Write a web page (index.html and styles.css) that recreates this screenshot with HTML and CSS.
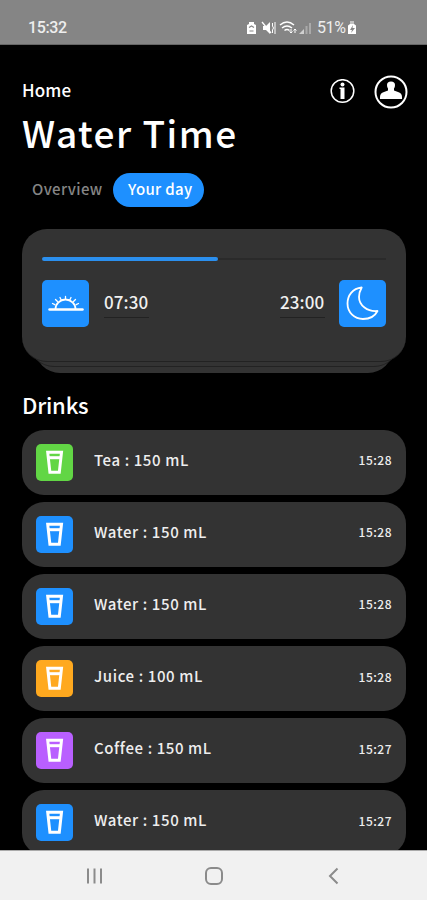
FILE: index.html
```html
<!DOCTYPE html>
<html lang="en">
<head>
    <meta charset="utf-8">
    <title>Water Time</title>
    <link rel="stylesheet" href="styles.css">
</head>
<body>
    <div class="phone">
        <div class="status-bar">
            <span class="status-time">15:32</span>
            <svg class="status-icons" width="68" height="16" viewBox="0 0 68 16">
                <path d="M2 14V5l2-1V2h5v2l2 1v9z" fill="#fff"/>
                <path d="M4 7.500L6.500 6 9 7.500M4.500 11h4" stroke="#858585" stroke-width="1.200" fill="none"/>
                <path d="M18 6h3l4-4v12l-4-4h-3z" fill="#fff"/>
                <path d="M17 2l9 11" stroke="#fff" stroke-width="1.300"/>
                <path d="M27.500 3v3l1 2-1 2v3M30 2v12" stroke="#fff" stroke-width="1" fill="none"/>
                <path d="M35 5q7-6 14 0M37 8q5-4 10 0M39.500 10.500q2.500-2 5 0" stroke="#fff" stroke-width="1.500" fill="none"/>
                <path d="M46 9v4M44.500 11.500L46 13l1.500-1.500M50 13V9M48.500 10.500L50 9l1.500 1.500" stroke="#fff" stroke-width="1" fill="none"/>
                <path d="M54 14l5-5v5z" fill="#d0d0d0"/>
                <path d="M61.500 14V6M65 14V3" stroke="#aaa" stroke-width="2"/>
            </svg>
            <span class="battery-text">51%</span>
            <svg class="battery" width="10" height="14" viewBox="0 0 10 14">
                <path d="M3 0h4v3H3z" fill="#c2c2c2"/>
                <path d="M1 4.500L3 3h4l2 1.500V13H1z" fill="#fff"/>
                <path d="M6 4L3 9h2l-1 3 4-5H5.500z" fill="#858585"/>
            </svg>
        </div>

        <div class="page">
            <div class="top">
                <div class="heading">
                    <div class="home">Home</div>
                    <h1>Water Time</h1>
                </div>
                <div class="actions">
                    <svg width="26" height="26" viewBox="0 0 26 26">
                        <circle cx="13.500" cy="12" r="11.300" fill="none" stroke="#fff" stroke-width="1.500"/>
                        <circle cx="13.500" cy="5.400" r="2" fill="#fff"/>
                        <path d="M10.500 8.500H15.500v11.500h-4V10h-1z" fill="#fff"/>
                    </svg>
                    <svg width="34" height="34" viewBox="0 0 34 34">
                        <circle cx="17" cy="17" r="15.500" fill="none" stroke="#fff" stroke-width="2"/>
                        <path d="M6 24v-2q0-4 4-5l4-1.500v-2q-1-1-1-3.500 0-3.500 4-3.500t4 3.500q0 2.500-1 3.500v2l4 1.500q4 1 4 5v2z" fill="#fff"/>
                    </svg>
                </div>
            </div>

            <div class="tabs">
                <span class="tab">Overview</span>
                <span class="tab active">Your day</span>
            </div>

            <div class="day-stack">
                <div class="day-card">
                    <div class="progress"><div class="bar" style="width: 51.2%"></div></div>
                    <div class="hours">
                        <div class="tile">
                            <svg width="47" height="47" viewBox="0 0 47 47" fill="none" stroke="#fff" stroke-linecap="round">
                                <path d="M7.500 29.500h33" stroke-width="2.500"/>
                                <path d="M13.500 29a10 9.500 0 0 1 20 0" stroke-width="1.800"/>
                                <path d="M23.500 16.500v2.500M18 17.500l1.200 2.500M29 17.500l-1.200 2.500M13.500 19.500l2 2M33.500 19.500l-2 2M10.500 23.500l2.300 1.200M36.500 23.500l-2.300 1.200" stroke-width="1.300"/>
                            </svg>
                        </div>
                        <span class="hour">07:30</span>
                        <span class="hour night">23:00</span>
                        <div class="tile">
                            <svg width="47" height="47" viewBox="0 0 47 47" fill="none" stroke="#fff" stroke-width="1.800" stroke-linejoin="round">
                                <path d="M22.700 7.500C13.500 8.500 8.500 15.500 8.500 23.500 8.500 32.500 15.500 39 24 39c6.500 0 12-3 14.500-8C28.500 32 20 25.500 20 17c0-3.500 1-6.500 2.700-9.500z"/>
                            </svg>
                        </div>
                    </div>
                </div>
                <div class="layer"></div>
                <div class="layer last"></div>
            </div>

            <h2>Drinks</h2>
            <div class="drinks" id="drinks"></div>
        </div>

        <div class="nav-bar">
            <svg width="427" height="49" viewBox="0 0 427 49" fill="none" stroke="#8b8b8b" stroke-width="2">
                <path d="M88 17.500v15M94.500 17.500v15M101 17.500v15"/>
                <rect x="206" y="17" width="16" height="16" rx="5"/>
                <path d="M337.500 17.500l-7.500 7.500 7.500 7.500"/>
            </svg>
        </div>
    </div>

    <script>
        const drinks = [
            ["Tea", 150, "15:28", "green"],
            ["Water", 150, "15:28", "blue"],
            ["Water", 150, "15:28", "blue"],
            ["Juice", 100, "15:28", "orange"],
            ["Coffee", 150, "15:27", "purple"],
            ["Water", 150, "15:27", "blue"]
        ];

        const cup = `<svg width="37" height="37" viewBox="0 0 37 37" fill="none" stroke="#fff" stroke-width="3">
            <path d="M11.700 8.300h13.800l-2.200 20h-9.400z"/>
            <path d="M12 13.700h13"/>
        </svg>`;

        document.getElementById("drinks").innerHTML = drinks.map(([name, amount, time, color]) =>
            `<div class="drink">
                <div class="cup ${color}">${cup}</div>
                <span class="name">${name} : ${amount} mL</span>
                <span class="time">${time}</span>
            </div>`
        ).join("");
    </script>
</body>
</html>
```
FILE: styles.css
```css
* {
    box-sizing: border-box;
}
body {
    margin: 0;
    background-color: black;
    color: white;
    font-family: "Noto Sans CJK JP", "Noto Sans", sans-serif;
}
svg {
    display: block;
    flex: none;
}
.phone {
    width: 427px;
    height: 900px;
    display: flex;
    flex-direction: column;
    overflow: hidden;
}
.status-bar {
    flex: none;
    display: flex;
    align-items: center;
    height: 45px;
    padding: 11px 0 0 28px;
    background-color: #858585;
    border-bottom: 1px solid #666;
    font-family: Roboto, sans-serif;
    font-size: 16px;
    color: #eee;
}
.status-time {
    width: 217px;
    font-weight: 500;
    letter-spacing: -0.4px;
}
.battery-text {
    margin-left: 4px;
    width: 30px;
    letter-spacing: -0.4px;
}
.page {
    flex: 1;
    min-height: 0;
    overflow: hidden;
    padding: 30px 21px 0 22px;
}
.top {
    display: flex;
    justify-content: space-between;
    height: 98px;
}
.home {
    font-size: 17px;
    line-height: 30px;
    font-weight: 500;
    letter-spacing: 0.1px;
}
h1 {
    margin: 0;
    font-size: 37px;
    line-height: 55px;
    font-weight: 500;
    letter-spacing: 1.5px;
    white-space: nowrap;
}
.actions {
    display: flex;
    align-items: center;
    gap: 19px;
    height: 34px;
    margin-right: -2px;
}
.tabs {
    display: flex;
    height: 34px;
    padding-left: 10px;
    font-size: 15px;
    line-height: 31px;
    letter-spacing: 0.5px;
}
.tab {
    width: 81px;
    color: #858585;
    white-space: nowrap;
    font-weight: 500;
    letter-spacing: 0.35px;
}
.tab.active {
    width: 91px;
    padding-left: 15px;
    border-radius: 17px;
    background-color: #1e90ff;
    color: white;
}
.day-stack {
    margin-top: 22px;
    height: 144px;
}
.day-card {
    position: relative;
    z-index: 2;
    height: 133px;
    padding: 28px 20px 0;
    border-radius: 25px;
    background-color: #333;
    border-bottom: 1px solid #222;
}
.layer {
    position: relative;
    z-index: 1;
    height: 30px;
    margin: -25px 7px 0;
    border-radius: 0 0 25px 25px;
    background-color: #333;
    border-bottom: 1px solid #222;
}
.layer.last {
    z-index: 0;
    margin: -24px 13px 0;
    border-bottom: 0;
}
.progress {
    height: 4px;
    background: linear-gradient(#333 1px, #2a2a2a 1px, #2a2a2a 3px, #333 3px);
}
.bar {
    height: 4px;
    border-radius: 2px;
    background-color: #2b8fee;
}
.hours {
    display: flex;
    margin-top: 19px;
}
.tile {
    width: 47px;
    height: 47px;
    border-radius: 5px;
    background-color: #1e90ff;
}
.hour {
    width: 45px;
    height: 38px;
    margin-left: 15px;
    border-bottom: 1px solid #222;
    color: #f0f0f0;
    font-size: 17px;
    line-height: 43px;
    font-weight: 500;
    letter-spacing: 0.1px;
}
.hour.night {
    margin-left: auto;
    margin-right: 14px;
}
h2 {
    margin: 14px 0 8.5px;
    font-size: 22px;
    line-height: 34px;
    font-weight: 500;
    letter-spacing: -0.2px;
}
.drinks {
    display: flex;
    flex-direction: column;
    gap: 7.2px;
}
.drink {
    flex: none;
    display: flex;
    align-items: center;
    height: 65px;
    padding: 0 14px;
    border-radius: 22px;
    background-color: #333;
    color: #eee;
}
.cup {
    width: 37px;
    height: 37px;
    border-radius: 5px;
}
.green {
    background-color: #62d645;
}
.blue {
    background-color: #1e90ff;
}
.orange {
    background-color: #ffa91f;
}
.purple {
    background-color: #b95fff;
}
.name {
    flex: 1;
    margin-left: 21px;
    padding-bottom: 5px;
    font-size: 15px;
    line-height: 24px;
    font-weight: 500;
    letter-spacing: 0.6px;
}
.time {
    padding-bottom: 5px;
    font-size: 12px;
    font-weight: 500;
    letter-spacing: 0.5px;
}
.nav-bar {
    flex: none;
    height: 50px;
    border-top: 1px solid #aaa;
    background-color: #f1f1f1;
}
```
